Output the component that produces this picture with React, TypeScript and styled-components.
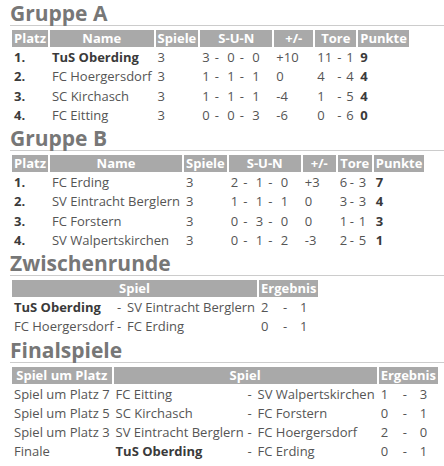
import styled, { createGlobalStyle } from "styled-components";

const GlobalStyle = createGlobalStyle`
    body {
        margin: 0;
        background: #fff;
        font-family: "Open Sans", "DejaVu Sans", sans-serif;
        font-size: 13px;
        color: #555;
    }
`;

const Page = styled.div`
    padding: 1px 0 0 10px;
`;

const Heading = styled.h2`
    margin: 0 0 2px;
    font-size: 21px;
    line-height: 24px;
    font-weight: 700;
    color: #777;
    border-bottom: 1px solid #ccc;
`;

const Table = styled.table`
    border-collapse: separate;
    border-spacing: 2px;
    font-size: 13px;
`;

const Th = styled.th<{ $w: number }>`
    width: ${p => p.$w - 4}px;
    padding: 0 2px;
    background: #a9a9a9;
    color: #fff;
    font-weight: 700;
    line-height: 17px;
    text-align: center;
    white-space: nowrap;
`;

const Td = styled.td<{ $bold?: boolean }>`
    padding: 0 2px;
    line-height: 17.25px;
    text-align: left;
    white-space: nowrap;
    font-weight: ${p => (p.$bold ? 700 : 400)};
    color: ${p => (p.$bold ? "#3a3a3a" : "#555")};
`;

const Team = styled.span<{ $bold?: boolean }>`
    font-weight: ${p => (p.$bold ? 700 : 400)};
    color: ${p => (p.$bold ? "#3a3a3a" : "#555")};
`;

const Sun = styled.div`
    display: grid;
    grid-template-columns: repeat(5, 12.5px);
`;

const Goals = styled.div<{ $left: number }>`
    display: grid;
    grid-template-columns: ${p => p.$left}px 9px auto;
`;

const Result = styled.div`
    display: grid;
    grid-template-columns: 22px 17px auto;
`;

const Match = styled.div<{ $first: number }>`
    display: grid;
    grid-template-columns: ${p => p.$first}px 10px auto;
`;

interface Row {
    name: string;
    bold?: boolean;
    sun: [number, number, number];
    diff: string;
    goals: [number, number];
    points: number;
}

interface Group {
    title: string;
    widths: number[];
    goalsLeft: number;
    rows: Row[];
}

const groups: Group[] = [
    {
        title: "Gruppe A",
        widths: [35, 102, 42, 72, 39, 41, 50],
        goalsLeft: 20,
        rows: [
            { name: "TuS Oberding", bold: true, sun: [3, 0, 0], diff: "+10", goals: [11, 1], points: 9 },
            { name: "FC Hoergersdorf", sun: [1, 1, 1], diff: "0", goals: [4, 4], points: 4 },
            { name: "SC Kirchasch", sun: [1, 1, 1], diff: "-4", goals: [1, 5], points: 4 },
            { name: "FC Eitting", sun: [0, 0, 3], diff: "-6", goals: [0, 6], points: 0 },
        ],
    },
    {
        title: "Gruppe B",
        widths: [35, 129, 42, 72, 33, 34, 50],
        goalsLeft: 10,
        rows: [
            { name: "FC Erding", sun: [2, 1, 0], diff: "+3", goals: [6, 3], points: 7 },
            { name: "SV Eintracht Berglern", sun: [1, 1, 1], diff: "0", goals: [3, 3], points: 4 },
            { name: "FC Forstern", sun: [0, 3, 0], diff: "0", goals: [1, 1], points: 3 },
            { name: "SV Walpertskirchen", sun: [0, 1, 2], diff: "-3", goals: [2, 5], points: 1 },
        ],
    },
];

const groupHeads = ["Platz", "Name", "Spiele", "S-U-N", "+/-", "Tore", "Punkte"];

interface Game {
    label?: string;
    home: string;
    homeBold?: boolean;
    away: string;
    score: [number, number];
}

const interim: Game[] = [
    { home: "TuS Oberding", homeBold: true, away: "SV Eintracht Berglern", score: [2, 1] },
    { home: "FC Hoergersdorf", away: "FC Erding", score: [0, 1] },
];

const finals: Game[] = [
    { label: "Spiel um Platz 7", home: "FC Eitting", away: "SV Walpertskirchen", score: [1, 3] },
    { label: "Spiel um Platz 5", home: "SC Kirchasch", away: "FC Forstern", score: [0, 1] },
    { label: "Spiel um Platz 3", home: "SV Eintracht Berglern", away: "FC Hoergersdorf", score: [2, 0] },
    { label: "Finale", home: "TuS Oberding", homeBold: true, away: "FC Erding", score: [0, 1] },
];

const GroupTable = ({ group }: { group: Group }) => (
    <>
        <Heading>{group.title}</Heading>
        <Table>
            <thead>
                <tr>
                    {groupHeads.map((h, i) => (
                        <Th key={h} $w={group.widths[i]}>{h}</Th>
                    ))}
                </tr>
            </thead>
            <tbody>
                {group.rows.map((r, i) => (
                    <tr key={r.name}>
                        <Td $bold>{i + 1}.</Td>
                        <Td $bold={r.bold}>{r.name}</Td>
                        <Td>3</Td>
                        <Td>
                            <Sun>
                                <span>{r.sun[0]}</span><span>-</span>
                                <span>{r.sun[1]}</span><span>-</span>
                                <span>{r.sun[2]}</span>
                            </Sun>
                        </Td>
                        <Td>{r.diff}</Td>
                        <Td>
                            <Goals $left={group.goalsLeft}>
                                <span>{r.goals[0]}</span><span>-</span><span>{r.goals[1]}</span>
                            </Goals>
                        </Td>
                        <Td $bold>{r.points}</Td>
                    </tr>
                ))}
            </tbody>
        </Table>
    </>
);

const Score = ({ score }: { score: [number, number] }) => (
    <Result>
        <span>{score[0]}</span><span>-</span><span>{score[1]}</span>
    </Result>
);

const Pairing = ({ game, first }: { game: Game; first: number }) => (
    <Match $first={first}>
        <Team $bold={game.homeBold}>{game.home}</Team>
        <span>-</span>
        <Team>{game.away}</Team>
    </Match>
);

export default function App() {
    return (
        <Page>
            <GlobalStyle />
            {groups.map(g => (
                <GroupTable key={g.title} group={g} />
            ))}

            <Heading>Zwischenrunde</Heading>
            <Table>
                <thead>
                    <tr>
                        <Th $w={245}>Spiel</Th>
                        <Th $w={58}>Ergebnis</Th>
                    </tr>
                </thead>
                <tbody>
                    {interim.map(g => (
                        <tr key={g.home}>
                            <Td><Pairing game={g} first={103} /></Td>
                            <Td><Score score={g.score} /></Td>
                        </tr>
                    ))}
                </tbody>
            </Table>

            <Heading>Finalspiele</Heading>
            <Table>
                <thead>
                    <tr>
                        <Th $w={98}>Spiel um Platz</Th>
                        <Th $w={262}>Spiel</Th>
                        <Th $w={59}>Ergebnis</Th>
                    </tr>
                </thead>
                <tbody>
                    {finals.map(g => (
                        <tr key={g.label}>
                            <Td>{g.label}</Td>
                            <Td><Pairing game={g} first={132} /></Td>
                            <Td><Score score={g.score} /></Td>
                        </tr>
                    ))}
                </tbody>
            </Table>
        </Page>
    );
}
